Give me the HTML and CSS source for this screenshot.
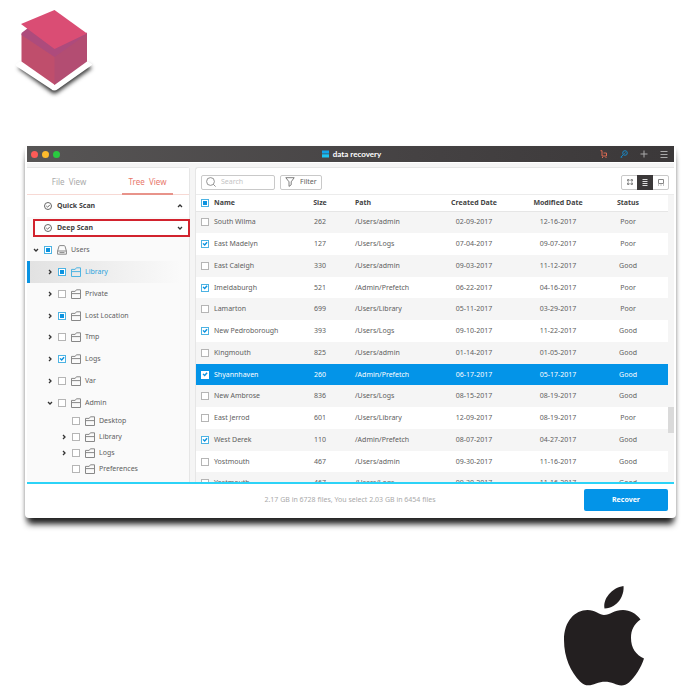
FILE: index.html
```html
<!DOCTYPE html>
<html lang="en">
<head>
<meta charset="utf-8">
<title>data recovery</title>
<link rel="stylesheet" href="styles.css">
</head>
<body>
<svg class="defs" aria-hidden="true">
  <symbol id="folder" viewBox="0 0 10 10"><path d="M.5 9.500V2.400H4.200L5.400 .8H9.500V9.500ZM.5 4.600H9.500"/></symbol>
  <symbol id="drive" viewBox="0 0 10 10"><path d="M.6 6L2 1.200Q2.200 .6 2.800 .6H7.200Q7.800 .6 8 1.200L9.400 6V9.200H.6ZM.6 6H9.400M2.500 7.600H7.500"/></symbol>
  <symbol id="right" viewBox="0 0 6 6"><path d="M2 1L4 3L2 5"/></symbol>
  <symbol id="down" viewBox="0 0 6 6"><path d="M1 2L3 4L5 2"/></symbol>
  <symbol id="up" viewBox="0 0 6 6"><path d="M1 4L3 2L5 4"/></symbol>
  <symbol id="done" viewBox="0 0 8 8"><circle cx="4" cy="4" r="3.500"/><path class="mark" d="M2.300 4L3.600 5.200L5.800 2.900"/></symbol>
</svg>

<header class="brand">
  <svg class="cube" viewBox="0 0 90 96" role="img" aria-label="Cube">
    <path class="cube-shadow" d="M11 62L44 86Q47 89 51 86L85 62L80 58L48 76L16 58Z"/>
    <path fill="#fff" d="M9 58L14 55H80L85 58V59L51 83Q47 86 44 83L9 60Z"/>
    <path fill="#bf4e6c" d="M14.500 28L48 50V79L14.500 55.500Z"/>
    <path fill="#b34d72" d="M47.500 50L80 27V55.500L47.500 79Z"/>
    <path fill="#ad4b7c" d="M14.500 27L21 22L47.500 42L80 26.500V28L47.500 51L14.500 29Z"/>
    <path fill="#da4d74" d="M14 18L47.500 4L80 27.500L47.500 43Z"/>
  </svg>
</header>

<main class="window">
  <div class="titlebar">
    <div class="lights"><i class="red"></i><i class="amber"></i><i class="green"></i></div>
    <h1><svg viewBox="0 0 8 8"><path fill="#12a5ec" d="M0 0H8V3.500H0Z"/><path fill="#1cc4f3" d="M0 4.300H8V8H0Z"/></svg>data recovery</h1>
    <nav class="actions">
      <button class="cart" aria-label="Cart"><svg viewBox="0 0 8 8"><path d="M.5 .7H2V6H6.500V3H3.500"/><path d="M2 7.500H3M5.500 7.500H6.500"/></svg></button>
      <button class="key" aria-label="License"><svg viewBox="0 0 8 8"><circle cx="5" cy="3" r="2.300"/><path d="M3.400 4.600L.8 7.200H2.300M4.400 3.700L5.500 2.500"/></svg></button>
      <button aria-label="Add"><svg viewBox="0 0 8 8"><path d="M.5 4H7.500M4 .5V7.500"/></svg></button>
      <button aria-label="Menu"><svg viewBox="0 0 8 8"><path d="M.5 1.500H7.500M.5 4.500H7.500M.5 7.500H7.500"/></svg></button>
    </nav>
  </div>

  <div class="workspace">
    <aside class="sidebar">
      <div class="tabs"><button>File&nbsp; View</button><button class="active">Tree&nbsp; View</button></div>
      <button class="scan"><svg class="done"><use href="#done"/></svg><span>Quick Scan</span><svg class="arrow"><use href="#up"/></svg></button>
      <button class="scan marked"><svg class="done"><use href="#done"/></svg><span>Deep Scan</span><svg class="arrow"><use href="#down"/></svg></button>
      <ul class="tree">
        <li class="root"><svg class="arrow"><use href="#down"/></svg><label><input type="checkbox" class="partial"><svg class="icon"><use href="#drive"/></svg>Users</label></li>
        <li class="current"><svg class="arrow"><use href="#right"/></svg><label><input type="checkbox" class="partial"><svg class="icon"><use href="#folder"/></svg>Library</label></li>
        <li><svg class="arrow"><use href="#right"/></svg><label><input type="checkbox"><svg class="icon"><use href="#folder"/></svg>Private</label></li>
        <li><svg class="arrow"><use href="#right"/></svg><label><input type="checkbox" class="partial"><svg class="icon"><use href="#folder"/></svg>Lost Location</label></li>
        <li><svg class="arrow"><use href="#right"/></svg><label><input type="checkbox"><svg class="icon"><use href="#folder"/></svg>Tmp</label></li>
        <li><svg class="arrow"><use href="#right"/></svg><label><input type="checkbox" checked><svg class="icon"><use href="#folder"/></svg>Logs</label></li>
        <li><svg class="arrow"><use href="#right"/></svg><label><input type="checkbox"><svg class="icon"><use href="#folder"/></svg>Var</label></li>
        <li><svg class="arrow"><use href="#down"/></svg><label><input type="checkbox"><svg class="icon"><use href="#folder"/></svg>Admin</label></li>
        <li class="leaf"><svg class="arrow"></svg><label><input type="checkbox"><svg class="icon"><use href="#folder"/></svg>Desktop</label></li>
        <li class="leaf"><svg class="arrow"><use href="#right"/></svg><label><input type="checkbox"><svg class="icon"><use href="#folder"/></svg>Library</label></li>
        <li class="leaf"><svg class="arrow"><use href="#right"/></svg><label><input type="checkbox"><svg class="icon"><use href="#folder"/></svg>Logs</label></li>
        <li class="leaf"><svg class="arrow"></svg><label><input type="checkbox"><svg class="icon"><use href="#folder"/></svg>Preferences</label></li>
      </ul>
    </aside>

    <section class="files">
      <div class="toolbar">
        <label class="search"><svg viewBox="0 0 10 10"><circle cx="4.500" cy="4.500" r="3.900"/><path d="M7.400 7.400L9.600 9.600"/></svg><input type="text" placeholder="Search" aria-label="Search"></label>
        <button class="filter"><svg viewBox="0 0 10 10"><path d="M.8 .7H9.200L6.200 4.800V7.800L4 9.400V4.800Z"/></svg>Filter</button>
        <div class="views">
          <button aria-label="Grid"><svg viewBox="0 0 8 8"><path d="M1.500 1.500H3V3H1.500ZM5 1.500H6.500V3H5ZM1.500 5H3V6.500H1.500ZM5 5H6.500V6.500H5Z"/></svg></button>
          <button class="on" aria-label="List"><svg viewBox="0 0 8 8"><path d="M1.500 1.500H6.500M1.500 3.500H6.500M1.500 5.500H6.500M1.500 7.500H6.500"/></svg></button>
          <button aria-label="Preview"><svg viewBox="0 0 8 8"><path d="M1.500 1.500H6.500V5.500H1.500ZM1 7H2M3.500 7H4.500M6 7H7"/></svg></button>
        </div>
      </div>
      <div class="list">
        <div class="rows">
          <table>
            <colgroup><col class="c-check"><col><col class="c-size"><col class="c-path"><col class="c-created"><col class="c-modified"><col class="c-status"></colgroup>
            <thead><tr><th><input type="checkbox" class="partial" aria-label="All"></th><th>Name</th><th>Size</th><th>Path</th><th>Created Date</th><th>Modified Date</th><th>Status</th></tr></thead>
            <tbody>
              <tr><td><input type="checkbox" id="f1"></td><td><label for="f1">South Wilma</label></td><td>262</td><td>/Users/admin</td><td>02-09-2017</td><td>12-16-2017</td><td>Poor</td></tr>
              <tr><td><input type="checkbox" id="f2" checked></td><td><label for="f2">East Madelyn</label></td><td>127</td><td>/Users/Logs</td><td>07-04-2017</td><td>09-07-2017</td><td>Poor</td></tr>
              <tr><td><input type="checkbox" id="f3"></td><td><label for="f3">East Caleigh</label></td><td>330</td><td>/Users/admin</td><td>09-03-2017</td><td>11-12-2017</td><td>Good</td></tr>
              <tr><td><input type="checkbox" id="f4" checked></td><td><label for="f4">Imeldaburgh</label></td><td>521</td><td>/Admin/Prefetch</td><td>06-22-2017</td><td>04-16-2017</td><td>Poor</td></tr>
              <tr><td><input type="checkbox" id="f5"></td><td><label for="f5">Lamarton</label></td><td>699</td><td>/Users/Library</td><td>05-11-2017</td><td>03-29-2017</td><td>Poor</td></tr>
              <tr><td><input type="checkbox" id="f6" checked></td><td><label for="f6">New Pedroborough</label></td><td>393</td><td>/Users/Logs</td><td>09-10-2017</td><td>11-22-2017</td><td>Good</td></tr>
              <tr><td><input type="checkbox" id="f7"></td><td><label for="f7">Kingmouth</label></td><td>825</td><td>/Users/admin</td><td>01-14-2017</td><td>01-05-2017</td><td>Good</td></tr>
              <tr class="selected"><td><input type="checkbox" id="f8" checked></td><td><label for="f8">Shyannhaven</label></td><td>260</td><td>/Admin/Prefetch</td><td>06-17-2017</td><td>05-17-2017</td><td>Good</td></tr>
              <tr><td><input type="checkbox" id="f9"></td><td><label for="f9">New Ambrose</label></td><td>836</td><td>/Users/Logs</td><td>08-15-2017</td><td>08-19-2017</td><td>Good</td></tr>
              <tr><td><input type="checkbox" id="f10"></td><td><label for="f10">East Jerrod</label></td><td>601</td><td>/Users/Library</td><td>12-09-2017</td><td>08-19-2017</td><td>Poor</td></tr>
              <tr><td><input type="checkbox" id="f11" checked></td><td><label for="f11">West Derek</label></td><td>110</td><td>/Admin/Prefetch</td><td>08-07-2017</td><td>04-27-2017</td><td>Good</td></tr>
              <tr><td><input type="checkbox" id="f12"></td><td><label for="f12">Yostmouth</label></td><td>467</td><td>/Users/admin</td><td>09-30-2017</td><td>11-16-2017</td><td>Good</td></tr>
              <tr><td><input type="checkbox" id="f13"></td><td><label for="f13">Yostmouth</label></td><td>467</td><td>/Users/Logs</td><td>09-30-2017</td><td>11-16-2017</td><td>Good</td></tr>
            </tbody>
          </table>
        </div>
        <div class="track"><div class="thumb"></div></div>
      </div>
    </section>
  </div>

  <footer class="status">
    <p>2.17 GB in 6728 files, You select 2.03 GB in 6454 files</p>
    <button class="recover">Recover</button>
  </footer>
</main>

<footer class="platform">
  <svg viewBox="0 0 80 100" role="img" aria-label="Apple">
    <path d="M59.500 0C60.500 9 54 22 40.500 22.500C38.500 13 48 1.500 59.500 0Z"/>
    <path d="M40 29C46 29 50 24 59 24C66 24 72 27.500 76.500 33.500C70 38 67 44 67 52C67 62 72 69 80 72.500C77 82 71 91 65 96.500C60 101 54 99.500 50 97.500C44 95 38 95 32 97.500C26 100 21 100.500 16 95.500C7 86 0 72 0 54C0 35 11 24 23.500 24C31 24 36 29 40 29Z"/>
  </svg>
</footer>
</body>
</html>
```
FILE: styles.css
```css
* { box-sizing: border-box; }

body {
  margin: 0;
  background: #fff;
  color: #606060;
  font: 7px/10px "Noto Sans", "Open Sans", sans-serif;
}

button {
  margin: 0;
  padding: 0;
  border: 0;
  background: none;
  color: inherit;
  font: inherit;
}

svg { display: block; flex: none; fill: none; stroke: currentColor; }
.defs { display: none; }

input[type="checkbox"] {
  appearance: none;
  display: block;
  flex: none;
  width: 8px;
  height: 8px;
  margin: 0;
  border: 1px solid #b5b5b5;
  background: #fff;
}

input[type="checkbox"]:checked,
input.partial { border-color: #4db3e3; }

input.partial::before {
  content: "";
  display: block;
  width: 4px;
  height: 4px;
  margin: 1px;
  background: #0b93e0;
}

input[type="checkbox"]:checked::before {
  content: "";
  display: block;
  width: 6px;
  height: 6px;
  background: #0b93e0;
  clip-path: polygon(8% 45%, 28% 35%, 43% 52%, 75% 12%, 94% 28%, 45% 85%);
}

.brand { padding: 6px 0 0 7px; height: 146px; }
.brand svg { width: 90px; height: 96px; stroke: none; overflow: visible; }
.cube-shadow { fill: #333; filter: blur(2px); }

.window {
  margin: 0 24px 0 25px;
  padding: 0 2px;
  border-radius: 4px;
  background: #fff;
  box-shadow: 0 9px 6px -3px #222, 0 3px 4px rgba(0, 0, 0, .25);
}

.titlebar {
  display: grid;
  grid-template-columns: 1fr auto 1fr;
  align-items: center;
  height: 16px;
  padding: 0 6px 0 4px;
  background: linear-gradient(90deg, #575555, #454243 60%, #3b3839);
  color: #fff;
}

.lights { display: flex; gap: 4px; }
.lights i { width: 7px; height: 7px; border-radius: 50%; }
.red { background: #fc5b57; }
.amber { background: #fdbb2d; }
.green { background: #29c940; }

h1 {
  display: flex;
  align-items: center;
  gap: 4px;
  margin: 0;
  padding-left: 4px;
  font: bold 8px/10px Lato, "Noto Sans", sans-serif;
}
h1 svg { width: 7px; height: 8px; stroke: none; }

.actions { display: flex; justify-content: flex-end; gap: 12px; color: #aaa; }
.actions svg { width: 8px; height: 8px; stroke-width: 1; }
.cart { color: #df6b52; }
.key { color: #1987c4; }

.workspace {
  display: grid;
  grid-template-columns: 163px 1fr;
  gap: 5px;
  height: 320px;
  padding-top: 4px;
  border-top: 1px solid #fff;
  background: #f5f5f5;
  overflow: hidden;
}

.sidebar {
  border: solid #e6e6e6;
  border-width: 1px 1px 0 0;
  border-radius: 0 3px 0 0;
  background: #fafafa;
}

.tabs {
  display: grid;
  grid-template-columns: 1fr 1fr;
  height: 27px;
  background: #fff;
  font-size: 8px;
  color: #aaa;
  border-bottom: 1px solid #f7d9d4;
}
.tabs button { margin-bottom: -1px; padding-left: 3px; }
.tabs .active {
  margin: 0 16px -1px 14px;
  padding: 0;
  border-bottom: 2px solid #e8938a;
  border-top: 2px solid transparent;
  color: #e8786b;
}

.scan {
  display: flex;
  align-items: center;
  width: 100%;
  height: 22px;
  padding: 0 6px 0 17px;
  background: #fff;
  color: #444;
  font-weight: bold;
  text-align: left;
}
.scan span { flex: 1; padding-left: 5px; }
.scan.marked {
  width: calc(100% - 5px);
  height: 18px;
  margin: 2px -1px 2px 6px;
  padding: 0 5px 0 9px;
  border: 2px solid #d2232e;
}
.done { width: 8px; height: 8px; stroke-width: 1; color: #666; }
.arrow { width: 6px; height: 6px; stroke: #333; stroke-width: 1.3; }

.tree { margin: 0; padding: 0; list-style: none; }
.tree li {
  display: flex;
  align-items: center;
  gap: 5px;
  height: 22px;
  padding-left: 20px;
}
.tree li:nth-child(4n) { height: 21px; }
.tree .root { padding-left: 6px; }
.tree li.leaf { height: 16px; padding-left: 34px; }
.tree .current {
  padding-left: 17px;
  border-left: 3px solid #0a93e2;
  background: linear-gradient(90deg, #e2e2e2, #fafafa 95%);
  color: #2ba3dc;
}
.tree label { display: flex; align-items: center; }
.icon { width: 10px; height: 10px; margin: 0 4px 0 5px; color: #888; }
.current .icon { color: #4fb4e2; }

.files {
  min-width: 0;
  border: solid #e6e6e6;
  border-width: 1px 0 0 1px;
  border-radius: 3px 0 0 0;
  background: #fff;
}

.toolbar {
  display: flex;
  align-items: center;
  gap: 5px;
  height: 27px;
  padding: 2px 5px 0;
  border-bottom: 1px solid #ececec;
}
.search, .filter, .views {
  display: flex;
  align-items: center;
  height: 15px;
  border: 1px solid #c9c9c9;
  border-radius: 2px;
}
.search { width: 74px; padding-left: 4px; gap: 5px; color: #777; }
.search svg, .filter svg { width: 10px; height: 10px; stroke-width: .8; }
.search input {
  width: 50px;
  padding: 0;
  border: 0;
  background: none;
  font: inherit;
  outline: 0;
}
.search input::placeholder { color: #c4c4c4; }
.filter { gap: 5px; padding: 0 4px; }
.views { margin-left: auto; color: #888; }
.views button {
  display: flex;
  align-items: center;
  justify-content: center;
  width: 15px;
  height: 13px;
}
.views svg { width: 8px; height: 8px; stroke-width: 1; }
.views .on { width: 16px; height: 15px; background: #3b3839; color: #ddd; }

.list { display: grid; grid-template-columns: 1fr 6px; height: 290px; }
.rows { overflow: hidden; }
.track { padding-top: 212px; background: #f5f5f5; }
.thumb { height: 26px; background: #dadada; }

table { width: 100%; table-layout: fixed; border-collapse: collapse; }
.c-check { width: 18px; }
.c-size { width: 58px; }
.c-path { width: 83px; }
.c-created { width: 84px; }
.c-modified { width: 84px; }
.c-status { width: 68px; }

th, td { padding: 0; text-align: center; white-space: nowrap; }
th { height: 16px; color: #444; border-bottom: 1px solid #e6e6e6; }
td { height: 22px; }
tbody tr:nth-child(4n) td { height: 21px; }
tbody tr:nth-child(odd) { background: #f5f5f5; }
th:nth-child(1), td:nth-child(1) { padding-left: 5px; }
th:nth-child(2), td:nth-child(2) { text-align: left; }
th:nth-child(4), td:nth-child(4) { padding-left: 6px; text-align: left; }
th:nth-child(7), td:nth-child(7) { padding-right: 12px; }
tbody .selected { background: #0394e8; color: #fff; }
.selected input[type="checkbox"] { border-color: #fff; }

.status {
  display: flex;
  align-items: center;
  height: 36px;
  padding: 0 6px 2px 0;
  border-top: 2px solid #2cd3f7;
}
.status p { flex: 1; margin: 0; padding-left: 89px; text-align: center; color: #aaa; }
.recover {
  width: 84px;
  height: 22px;
  border-radius: 2px;
  background: #0394e8;
  color: #fff;
  font-weight: bold;
}

.platform { display: flex; justify-content: flex-end; padding: 68px 56px 14px 0; }
.platform svg { width: 80px; height: 100px; fill: #231f20; stroke: none; }
```
